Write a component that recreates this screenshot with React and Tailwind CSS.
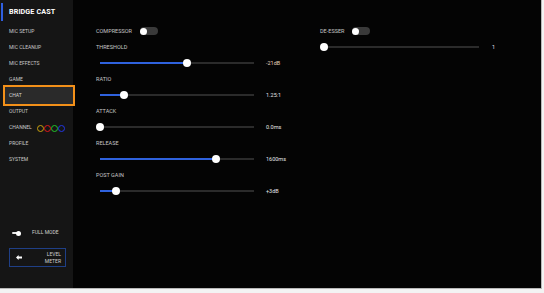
import React from 'react';

const navItems = ['MIC SETUP', 'MIC CLEANUP', 'MIC EFFECTS', 'GAME', 'CHAT', 'OUTPUT', 'CHANNEL', 'PROFILE', 'SYSTEM'];

const compressorRows = [
  { label: 'THRESHOLD', value: '-21dB', frac: 0.565, warm: true },
  { label: 'RATIO', value: '1.25:1', frac: 0.156 },
  { label: 'ATTACK', value: '0.0ms', frac: 0 },
  { label: 'RELEASE', value: '1600ms', frac: 0.753 },
  { label: 'POST GAIN', value: '+3dB', frac: 0.102 }
];

const Toggle = () => (
  <div className="relative w-[18px] h-[8px] rounded-full bg-[#3a3a3a]">
    <div className="absolute left-0 top-[0.5px] w-[7px] h-[7px] rounded-full bg-white" />
  </div>
);

const Slider = ({ width, frac }) => (
  <div className="relative h-[8px]" style={{ width }}>
    <div className="absolute left-0 right-0 top-[3px] h-[2px] bg-[#2b2b2b]" />
    <div className="absolute left-0 top-[3px] h-[2px] bg-[#2f62de]" style={{ width: width * frac }} />
    <div
      className="absolute top-0 w-[8px] h-[8px] rounded-full bg-white"
      style={{ left: width * frac - 4 }}
    />
  </div>
);

const ChannelDots = () => (
  <div className="flex items-center ml-[5px]">
    {['#c9a00c', '#e0181c', '#23c42a', '#2336e6'].map(c => (
      <div key={c} className="w-[7px] h-[7px] rounded-full border-[1.5px]" style={{ borderColor: c }} />
    ))}
  </div>
);

const Sidebar = () => (
  <div className="relative z-10 w-[73px] h-full bg-[#151515] flex flex-col">
    {/* title */}
    <div className="mt-[3px] h-[18px] flex items-center">
      <div className="ml-[1px] w-[2px] h-full bg-[#2f5fe0]" />
      <span className="ml-[6px] text-[7.2px] font-bold text-white tracking-[0.1px]">BRIDGE CAST</span>
    </div>

    <div className="mt-[3px] flex flex-col">
      {navItems.map(item =>
        item === 'CHAT' ? (
          <div
            key={item}
            className="-mt-[3px] -mb-[2px] ml-[3px] w-[72px] h-[21px] border-2 border-[#f39019] bg-[#2a2a2a] flex items-center pl-[4px] text-[5px] text-[#d6d6d6]"
          >
            {item}
          </div>
        ) : (
          <div key={item} className="h-4 flex items-center pl-[9px] text-[5px] text-[#c8c8c8]">
            {item}
            {item === 'CHANNEL' && <ChannelDots />}
          </div>
        )
      )}
    </div>

    <div className="flex-1" />

    {/* full mode toggle */}
    <div className="h-[10px] flex items-center pl-[12px]">
      <div className="relative w-[8px] h-[2px] bg-[#e8e8e8] rounded-full">
        <div className="absolute -right-[1px] -top-[1.5px] w-[5px] h-[5px] rounded-full bg-white" />
      </div>
      <span className="ml-[12px] text-[5px] text-[#d0d0d0]">FULL MODE</span>
    </div>

    {/* level meter */}
    <div className="mt-[10px] mb-[21px] ml-[9px] w-[57px] h-[19px] border border-[#1f3f86] flex items-center justify-between pl-[6px] pr-[4px]">
      <svg width="6" height="5" viewBox="0 0 6 5">
        <path d="M0 2.5 L2.6 0 L2.6 1.4 L6 1.4 L6 3.6 L2.6 3.6 L2.6 5 Z" fill="#ffffff" />
      </svg>
      <div className="flex flex-col items-end leading-[6.5px] text-[5px] text-[#d0d0d0]">
        <span>LEVEL</span>
        <span>METER</span>
      </div>
    </div>
  </div>
);

export default function App() {
  return (
    <div className="w-[544px] h-[293px] bg-[#f3f3f3]" style={{ fontFamily: 'Roboto, "Noto Sans", sans-serif' }}>
      <div className="w-[542px] h-[289px] border-r border-b border-[#b8b8b8] flex bg-[#040404]">
        <Sidebar />

        <div className="flex-1 flex pt-[23px] pl-[23px]">
          {/* compressor column */}
          <div className="w-[224px] flex flex-col">
            <div className="h-4 flex items-center">
              <span className="text-[5.5px] text-[#c4c4c4]">COMPRESSOR</span>
              <div className="ml-[8px]">
                <Toggle />
              </div>
            </div>
            {compressorRows.map(r => (
              <div key={r.label} className="flex flex-col">
                <div className="h-4 flex items-center text-[5.5px] text-[#c4c4c4]">{r.label}</div>
                <div className="h-4 flex items-center pl-[4px]">
                  <Slider width={154} frac={r.frac} />
                  <span className={`ml-[12px] text-[5.5px] ${r.warm ? 'text-[#e6d3bf]' : 'text-[#e4e4e4]'}`}>
                    {r.value}
                  </span>
                </div>
              </div>
            ))}
          </div>

          {/* de-esser column */}
          <div className="flex flex-col">
            <div className="h-4 flex items-center">
              <span className="text-[5.5px] text-[#c4c4c4]">DE-ESSER</span>
              <div className="ml-[8px]">
                <Toggle />
              </div>
            </div>
            <div className="h-4 flex items-center pl-[2px]">
              <Slider width={157} frac={0.013} />
              <span className="ml-[13px] text-[5.5px] text-[#e4e4e4]">1</span>
            </div>
          </div>
        </div>
      </div>
    </div>
  );
}
